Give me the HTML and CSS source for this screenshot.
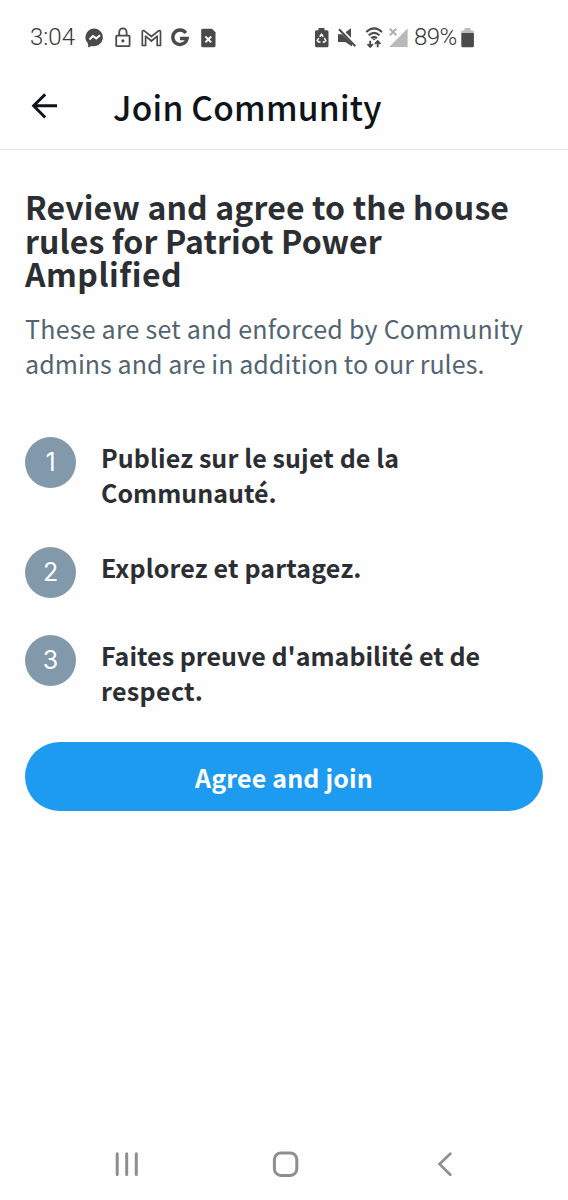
FILE: index.html
```html
<!DOCTYPE html>
<html lang="en">
<head>
<meta charset="utf-8">
<title>Join Community</title>
<link rel="stylesheet" href="styles.css">
</head>
<body>
<div class="screen">
  <div class="status">
    <div class="status-left">
      <span class="clock">3:04</span>
      <svg class="status-icons" width="136" height="30" viewBox="80 22 136 30">
        <path fill="#4a4a4a" d="M94.700 28.500a9.200 8.900 0 0 0-6.700 15l.3 3.900 3.300-1.400a9.200 8.900 0 1 0 3.100-17.500z"/>
        <path d="M89.500 39.500l3.500-3.500 3.200 2.400 3.800-3.200" fill="none" stroke="#fff" stroke-width="2"/>
        <rect x="116.200" y="35.600" width="13.400" height="10.600" rx="1" fill="none" stroke="#4a4a4a" stroke-width="1.800"/>
        <path d="M119.200 35.500v-3.200a3.700 4 0 0 1 7.400 0v3.200" fill="none" stroke="#4a4a4a" stroke-width="1.800"/>
        <circle cx="122.900" cy="40.800" r="1.600" fill="#4a4a4a"/>
        <path d="M142.300 45.500V32q0-2 2-1.200l7.100 5.700 7.100-5.700q2-.8 2 1.200v13.500h-3.300v-9.300l-5.800 4.800-5.800-4.800v9.300z" fill="none" stroke="#4a4a4a" stroke-width="1.700" stroke-linejoin="round"/>
        <path d="M185.800 32.900A7.200 7.200 0 1 0 187.100 38.500H180" fill="none" stroke="#4a4a4a" stroke-width="3.400"/>
        <path d="M202.700 28.800h9.300l3.500 3.500v13.400q0 1.500-1.500 1.500h-11.300q-1.500 0-1.500-1.500V30.300q0-1.500 1.500-1.500z" fill="#4a4a4a"/>
        <path d="M205.400 36.500l5.800 5.800m0-5.800l-5.800 5.800" stroke="#fff" stroke-width="1.900"/>
      </svg>
    </div>
    <div class="status-right">
      <svg class="status-icons" width="98" height="30" viewBox="312 22 98 30">
        <path d="M318.500 28h6v2.200h2.500q1.500 0 1.500 1.500v14q0 1.500-1.500 1.500h-10.500q-1.500 0-1.500-1.500v-14q0-1.500 1.500-1.500h2z" fill="#4a4a4a"/>
        <path d="M319.700 36.700l1.800-2.400 1.800 2.400m1.100 1.300l1.400 2.700-1.400 1.300h-1.700m-2.200 0h-1.900l-1.300-1.300 1.400-2.700" fill="none" stroke="#fff" stroke-width="1.500"/>
        <path d="M338 34.200h4.200l9.800 9.500v2.800l-6.700-4.500H338z M344.400 33l6.600-4.800v11z" fill="#4a4a4a"/>
        <path d="M340.500 28.300l16 17" stroke="#fefefe" stroke-width="2"/>
        <path d="M339 29.300l16.300 16.900" stroke="#4a4a4a" stroke-width="2"/>
        <path d="M366.200 31.900q7.900-7 15.800 0M368.700 35.200q5.400-4.700 10.800 0M371.200 38.100q2.900-2.200 5.800 0" fill="none" stroke="#4a4a4a" stroke-width="2"/>
        <path d="M372 38.500h4.200l-2.100 2z" fill="#4a4a4a"/>
        <path d="M370.200 40.700v6m-2.700-2.600l2.700 2.700 2.700-2.700M377.700 47.300v-6.200m-2.700 2.700l2.700-2.700 2.700 2.700" fill="none" stroke="#4a4a4a" stroke-width="1.900"/>
        <path d="M407.600 28.600v18.500h-18.500z" fill="#b9b9b9"/>
        <path d="M389.800 28.800l6.500 6.500m0-6.500l-6.500 6.500" stroke="#b0b0b0" stroke-width="2.100"/>
      </svg>
      <span class="percent">89%</span>
      <svg class="status-icons" width="14" height="30" viewBox="461 22 14 30">
        <path d="M464.500 28h6v2.600h3.200v3h-12.400v-3h3.200z" fill="#bdbdbd"/>
        <path d="M461.300 33h12.600v12.700q0 1.500-1.500 1.500h-9.600q-1.500 0-1.500-1.500z" fill="#4a4a4a"/>
      </svg>
    </div>
  </div>
  <header class="bar">
    <svg class="back" width="28" height="28" viewBox="31 92 28 28">
      <path d="M57 105.800H33.500M45.200 94.400L33.600 105.800l11.600 11.700" fill="none" stroke="#0f1419" stroke-width="2.900"/>
    </svg>
    <div class="bar-title">Join Community</div>
  </header>
  <main class="content">
    <h1 class="heading"><span class="h-a">Review and agree to the house</span><br><span class="h-b">rules for Patriot Power</span><br><span class="h-c">Amplified</span></h1>
    <p class="sub"><span class="s-a">These are set and enforced by Community</span><br><span class="s-b">admins and are in addition to our rules.</span></p>
    <ol class="rules">
      <li class="rule"><span class="num">1</span><span class="rule-text"><span class="r-a">Publiez sur le sujet de la</span><br><span class="r-b">Communauté.</span></span></li>
      <li class="rule"><span class="num">2</span><span class="rule-text"><span class="r-c">Explorez et partagez.</span></span></li>
      <li class="rule"><span class="num">3</span><span class="rule-text"><span class="r-d">Faites preuve d'amabilité et de</span><br><span class="r-e">respect.</span></span></li>
    </ol>
    <button class="join">Agree and join</button>
  </main>
  <nav class="nav">
    <svg width="340" height="30" viewBox="114 1149 340 30" fill="none" stroke="#8e8e8e" stroke-linecap="round">
      <path d="M117.200 1153.700v20.800M126.700 1153.700v20.800M136.300 1153.700v20.800" stroke-width="3"/>
      <rect x="274.400" y="1153" width="22.400" height="22.400" rx="6.500" stroke-width="3"/>
      <path d="M450.300 1153.800l-10.700 10.300 10.700 10.700" stroke-width="2.700"/>
    </svg>
  </nav>
</div>
</body>
</html>
```
FILE: styles.css
```css
* { box-sizing: border-box; }
body { margin: 0; background: #fff; font-family: "Noto Sans CJK SC", "Noto Sans", sans-serif; }
.screen { width: 568px; height: 1200px; display: flex; flex-direction: column; background: #fefefe; }
.status { height: 74px; padding: 0 93px 0 30px; display: flex; justify-content: space-between; align-items: center; font-family: Roboto, sans-serif; font-size: 24px; font-weight: 300; color: #383838; }
.status-left, .status-right { display: flex; align-items: center; }
.status-icons { display: block; flex: none; }
.clock { width: 50px; letter-spacing: 0; white-space: nowrap; }
.percent { width: 51px; padding-left: 4px; letter-spacing: -0.6px; white-space: nowrap; }
.bar { height: 76px; padding-left: 31px; display: flex; align-items: flex-start; border-bottom: 1px solid #e3e5e6; color: #0f1419; }
.back { margin-top: 18px; flex: none; }
.bar-title { margin: 10px 0 0 54px; font-size: 33.500px; line-height: 45px; font-weight: 500; letter-spacing: 0.250px; white-space: nowrap; }
.content { flex: 1; padding: 40px 25px 0; white-space: nowrap; }
.heading { margin: 0; font-size: 32px; line-height: 33.500px; font-weight: 700; color: #2b2e33; }
.h-a { letter-spacing: 0.140px; }
.h-b { letter-spacing: 0.100px; }
.h-c { letter-spacing: 0.500px; }
.sub { margin: 20.500px 0 0; font-size: 25px; line-height: 35px; color: #536471; }
.s-a { letter-spacing: 0.240px; }
.s-b { letter-spacing: 0.050px; }
.rules { list-style: none; margin: 56px 0 0; padding: 0; display: flex; flex-direction: column; gap: 37.500px; }
.rule { display: flex; gap: 25px; min-height: 50.500px; }
.rule:last-child { margin-top: -0.500px; }
.num { width: 51px; height: 51px; flex: none; border-radius: 50%; background: #8299ab; color: #fff; font-family: Inter, "Liberation Sans", sans-serif; font-size: 25px; line-height: 51px; text-align: center; }
.rule-text { padding-top: 2.500px; font-size: 25px; line-height: 35px; font-weight: 700; color: #2b2e33; }
.rule:last-child .rule-text { padding-top: 3px; }
.r-a { letter-spacing: 0.110px; }
.r-c { letter-spacing: 0.140px; }
.r-d { letter-spacing: 0.020px; }
.r-e { letter-spacing: 0.350px; }
.join { display: block; width: 518px; height: 69px; margin: 34px 0 0; padding: 0; border: 0; border-radius: 35px; background: #1d9bf0; color: #fff; font: 700 25px/68px "Noto Sans CJK SC", "Noto Sans", sans-serif; letter-spacing: 0.150px; text-align: center; }
.nav { height: 51px; padding-left: 114px; }
.nav svg { display: block; }
```
